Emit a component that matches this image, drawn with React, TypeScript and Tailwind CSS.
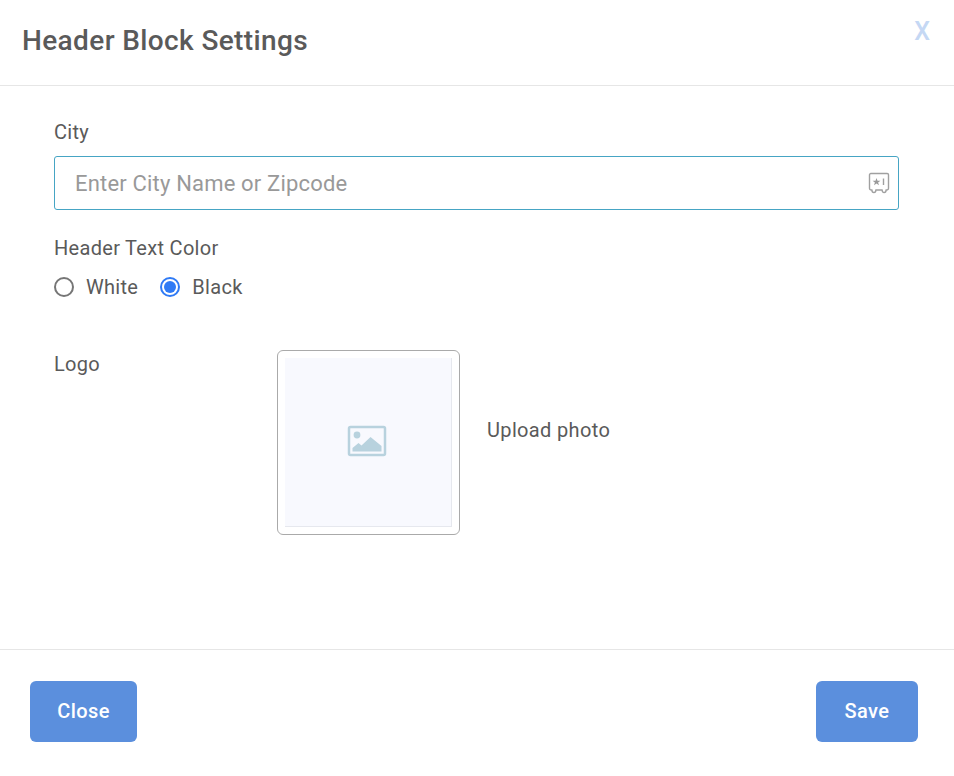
export default function App() {
  return (
    <div className="h-[776px] w-[954px] bg-white font-['Roboto',sans-serif] text-[#5a5a5a]">
      {/* Header */}
      <div className="flex h-[86px] items-start justify-between border-b border-[#e6e6e6] pl-[22px] pr-[24px]">
        <h2 className="mt-[22px] text-[28px] font-medium leading-[38px] tracking-[0.38px] text-[#5a5a5a]">Header Block Settings</h2>
        <span className="mt-[16px] text-[25px] font-medium leading-[32px] text-[#c5d8f4]">X</span>
      </div>

      {/* Body */}
      <div className="h-[563px] pl-[54px] pr-[55px]">
        <div className="pt-[33px] text-[20px] leading-[26px] tracking-[0.3px]">City</div>
        <div className="mt-[11px] flex h-[54px] items-center justify-between rounded-[3px] border border-[#46a5c4] pl-[20px] pr-[8px]">
          <span className="text-[22px] tracking-[0.18px] text-[#999]">Enter City Name or Zipcode</span>
          <svg width="22" height="22" viewBox="0 0 22 22" fill="none" stroke="#a0a0a0" strokeWidth="1.4" strokeLinejoin="round">
            <path d="M2.8 1.5h16.4a1.3 1.3 0 0 1 1.3 1.3v13.4a1.8 1.8 0 0 1-1.8 1.8h-.7v.6a1.9 1.9 0 0 1-3.8 0v-.6H7.8v.6a1.9 1.9 0 0 1-3.8 0v-.6h-.7a1.8 1.8 0 0 1-1.8-1.8V2.8a1.3 1.3 0 0 1 1.3-1.3z" />
            <path d="M8.5 6l1 2.8h2.9l-2.3 1.7.9 2.8-2.5-1.7-2.5 1.7.9-2.8-2.3-1.7h2.9z" fill="#999" stroke="none" />
            <path d="M15.5 6.5v6.5" />
          </svg>
        </div>
        <div className="mt-[25px] text-[20px] leading-[26px] tracking-[0.3px]">Header Text Color</div>
        <div className="mt-[13px] flex h-[26px] items-center text-[20px] tracking-[0.3px]">
          <span className="h-[20px] w-[20px] rounded-full border-[2px] border-[#767676]" />
          <span className="ml-[12px]">White</span>
          <span className="ml-[21.5px] flex h-[20px] w-[20px] items-center justify-center rounded-full border-[2px] border-[#2f7af5]">
            <span className="h-[12px] w-[12px] rounded-full bg-[#2f7af5]" />
          </span>
          <span className="ml-[12.5px]">Black</span>
        </div>

        {/* Logo */}
        <div className="mt-[50px] flex items-start">
          <div className="mt-[1px] w-[223px] text-[20px] leading-[26px] tracking-[0.3px]">Logo</div>
          <div className="h-[185px] w-[183px] rounded-[6px] border border-[#aaa] p-[7px]">
            <div className="flex h-full w-full items-center justify-center border-r border-b border-[#e6e8ee] bg-[#f8f9fe]">
              <svg width="40" height="32" viewBox="0 0 40 32" className="mr-[2px] mt-[-2px]">
                <rect x="2" y="2" width="36" height="28" rx="1.5" fill="none" stroke="#b8d2de" strokeWidth="2.5" />
                <circle cx="10" cy="10" r="3.4" fill="#b8d2de" />
                <path d="M5.5 26.5v-3.5l6-5 3 2.5 9-8.5 11 9v5.5z" fill="#b8d2de" />
              </svg>
            </div>
          </div>
          <div className="ml-[27px] mt-[67px] text-[20px] leading-[26px] tracking-[0.35px]">Upload photo</div>
        </div>
      </div>

      {/* Footer */}
      <div className="flex h-[127px] items-start justify-between border-t border-[#e6e6e6] pl-[30px] pr-[36px] pt-[31px]">
        <button className="h-[61px] w-[107px] rounded-[6px] bg-[#5b8fdd] pb-[2px] text-[20px] font-medium tracking-[0.4px] text-white">Close</button>
        <button className="h-[61px] w-[102px] rounded-[6px] bg-[#5b8fdd] pb-[2px] text-[20px] font-medium tracking-[0.4px] text-white">Save</button>
      </div>
    </div>
  )
}
